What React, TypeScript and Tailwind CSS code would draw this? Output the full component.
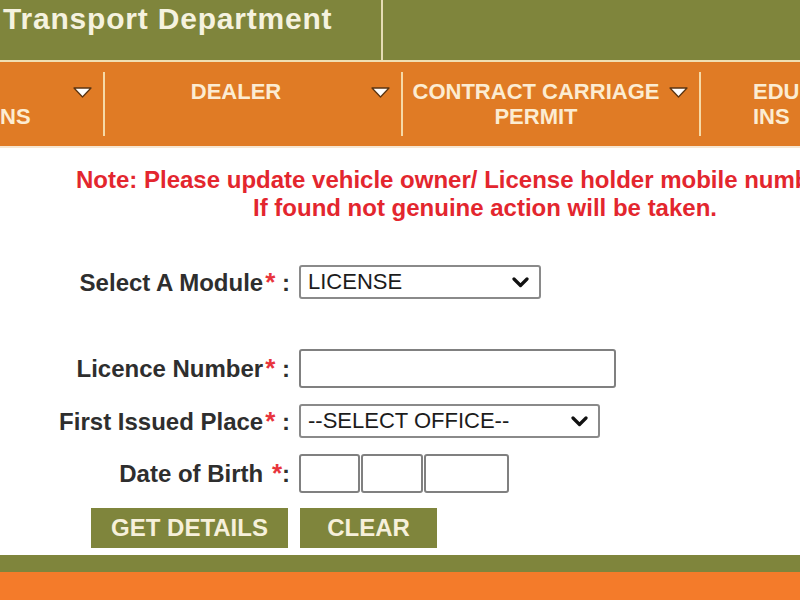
const NAV_TEXT = "text-[22px] font-bold leading-[25px] text-[#fcecd2]";

function NavArrow() {
  return (
    <svg
      className="absolute right-[11px] top-[15px]"
      width="19"
      height="11"
      viewBox="0 0 19 11"
    >
      <polygon points="1,1 18,1 9.5,10" fill="#ffffff" stroke="#5b3512" strokeWidth="1.3" strokeLinejoin="round" />
    </svg>
  );
}

function Chevron() {
  return (
    <svg width="17" height="11" viewBox="0 0 17 11">
      <polyline points="2,2 8.5,8.5 15,2" fill="none" stroke="#111" strokeWidth="3.2" strokeLinecap="round" strokeLinejoin="round" />
    </svg>
  );
}

function Star() {
  return <span className="text-[#e8343c] text-[26px] relative top-[0px] ml-[2px]">*</span>;
}

function Label({ children }: { children: React.ReactNode }) {
  return (
    <div className="w-[290px] text-right text-[24px] font-bold text-[#2e2e2e] whitespace-nowrap">
      {children}
    </div>
  );
}

function FakeSelect({ value, width, height }: { value: string; width: string; height: string }) {
  return (
    <div
      className={`${width} ${height} flex items-center justify-between border-2 border-[#8a8a8a] rounded-[3px] bg-white pl-[7px] pr-[10px]`}
    >
      <span className="text-[22px] text-[#1c1c1c] leading-none">{value}</span>
      <Chevron />
    </div>
  );
}

function Box({ width }: { width: string }) {
  return <div className={`${width} h-[39px] border-2 border-[#808080] rounded-[3px] bg-white`} />;
}

export default function App() {
  return (
    <div className="w-[800px] h-[600px] overflow-hidden bg-white font-['Liberation_Sans',Arial,sans-serif] flex flex-col">
      {/* top banner */}
      <div className="flex h-[60px] bg-[#7f853c] shrink-0">
        <div className="w-[383px] border-r-2 border-[#e6dcb4] pl-[3px] pt-[4px]">
          <span className="text-[30px] font-bold leading-none tracking-[0.8px] text-[#f5f2df] whitespace-nowrap">
            Transport Department
          </span>
        </div>
      </div>
      <div className="h-[2px] bg-[#f0dfb2] shrink-0" />

      {/* menu bar */}
      <div className="flex h-[84px] bg-[#e07b25] shrink-0 overflow-hidden">
        <div className="relative w-[105px] my-[10px] border-r-2 border-[#f6d9a6] pt-[32px]">
          <div className={NAV_TEXT}>NS</div>
          <NavArrow />
        </div>
        <div className="relative w-[298px] shrink-0 my-[10px] border-r-2 border-[#f6d9a6] pt-[7px] pr-[34px] text-center">
          <div className={NAV_TEXT}>DEALER</div>
          <NavArrow />
        </div>
        <div className="relative w-[298px] shrink-0 my-[10px] border-r-2 border-[#f6d9a6] pt-[7px] pr-[30px] text-center">
          <div className={NAV_TEXT}>
            CONTRACT CARRIAGE
            <br />
            PERMIT
          </div>
          <NavArrow />
        </div>
        <div className="my-[10px] pt-[7px] pl-[52px]">
          <div className={NAV_TEXT}>
            EDU
            <br />
            INS
          </div>
        </div>
      </div>
      <div className="h-[2px] bg-[#f6e7d2] shrink-0" />

      {/* content */}
      <div className="w-[970px] shrink-0 pt-[18px]">
        <div className="text-[24px] font-bold leading-[28px] text-[#e3262e]">
          <div className="pl-[76px] whitespace-nowrap">
            Note: Please update vehicle owner/ License holder mobile number
          </div>
          <div className="text-center whitespace-nowrap">If found not genuine action will be taken.</div>
        </div>

        <div className="mt-[43px] flex flex-col">
          <div className="flex items-center gap-[9px] h-[34px]">
            <Label>
              Select A Module<Star /> :
            </Label>
            <FakeSelect value="LICENSE" width="w-[242px]" height="h-[34px]" />
          </div>

          <div className="mt-[50px] flex items-center gap-[9px] h-[39px]">
            <Label>
              Licence Number<Star /> :
            </Label>
            <Box width="w-[317px]" />
          </div>

          <div className="mt-[16px] flex items-center gap-[9px] h-[34px]">
            <Label>
              First Issued Place<Star /> :
            </Label>
            <FakeSelect value="--SELECT OFFICE--" width="w-[301px]" height="h-[34px]" />
          </div>

          <div className="mt-[16px] flex items-center gap-[9px] h-[39px]">
            <Label>
              Date of Birth <Star />:
            </Label>
            <div className="flex gap-[1px]">
              <Box width="w-[61px]" />
              <Box width="w-[62px]" />
              <Box width="w-[85px]" />
            </div>
          </div>

          <div className="mt-[15px] flex gap-[12px] pl-[91px]">
            <button className="w-[197px] h-[40px] bg-[#7f853c] text-[24px] font-bold text-[#f6f0da]">
              GET DETAILS
            </button>
            <button className="w-[137px] h-[40px] bg-[#7f853c] text-[24px] font-bold text-[#f6f0da]">
              CLEAR
            </button>
          </div>
        </div>
      </div>

      {/* footer bands */}
      <div className="mt-[7px] h-[17px] bg-[#7f853c] shrink-0" />
      <div className="flex-1 bg-[#f47b2a]" />
    </div>
  );
}
